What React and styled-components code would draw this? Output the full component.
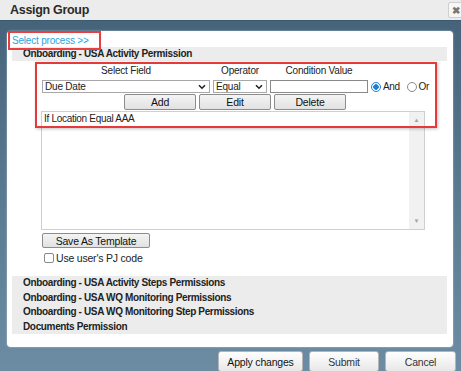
import React from 'react';
import styled, { createGlobalStyle } from 'styled-components';

const GlobalStyle = createGlobalStyle`
    html, body {
        margin: 0;
        padding: 0;
        width: 461px;
        height: 371px;
        overflow: hidden;
        font-family: "Liberation Sans", Arial, sans-serif;
        font-size: 10px;
        color: #222;
    }
    `;

const Dialog = styled.div`
    width: 461px;
    height: 371px;
    display: flex;
    flex-direction: column;
    overflow: hidden;
    `;

const TitleBar = styled.div`
    flex-shrink: 0;
    height: 20px;
    display: flex;
    align-items: center;
    justify-content: space-between;
    background: #ececec;
    border-bottom: 1px solid #3c596e;
    padding-left: 10px;
    `;

const Title = styled.h1`
    margin: 0;
    font-size: 12.5px;
    font-weight: 700;
    letter-spacing: -0.3px;
    color: #2a2a2a;
    `;

const CloseButton = styled.div`
    width: 13px;
    height: 14px;
    margin-right: -2px;
    border: 1px solid #cfcfcf;
    border-radius: 2px;
    background: #f7f7f7;
    color: #777;
    font-size: 10px;
    font-weight: 700;
    display: flex;
    align-items: center;
    justify-content: center;
    `;

const Body = styled.div`
    flex: 1;
    min-height: 0;
    display: flex;
    flex-direction: column;
    padding: 10px 5px 0 7px;
    background: linear-gradient(180deg, #45647c 0%, #5a7a92 50%, #6c8ca3 100%);
    `;

const Panel = styled.div`
    flex-shrink: 0;
    width: 446px;
    box-sizing: border-box;
    background: #fff;
    border-radius: 4px;
    padding: 2px 6px 13px 5px;
    box-shadow: 0 0 2px rgba(255, 255, 255, 0.6);
    `;

const LinkRow = styled.div`
    height: 14px;
    display: flex;
    align-items: center;
    position: relative;
    z-index: 1;
    `;

const Link = styled.a`
    color: #2aa4de;
    font-size: 10px;
    letter-spacing: -0.2px;
    text-decoration: none;
    outline: 2px solid #e84040;
    padding: 1px 10px 1px 2px;
    margin-left: -2px;
    line-height: 13px;
    `;

const SectionHeader = styled.div`
    background: #ececec;
    font-weight: 700;
    letter-spacing: -0.35px;
    height: 14px;
    line-height: 14px;
    padding-left: 11px;
    `;

const Conditions = styled.div`
    position: relative;
    width: 384px;
    margin-left: 29px;
    padding-top: 4px;
    display: flex;
    flex-direction: column;
    `;

const Annotation = styled.div`
    position: absolute;
    left: -6px;
    top: 1px;
    box-sizing: border-box;
    width: 402px;
    height: 66px;
    border: 2px solid #e6393a;
    box-shadow: 1px 1px 3px rgba(0, 0, 0, 0.25);
    pointer-events: none;
    `;

const FieldGrid = styled.div`
    display: grid;
    grid-template-columns: 168px 54px 98px auto;
    column-gap: 3px;
    row-gap: 3px;
    padding-left: 1px;
    align-items: center;
    `;

const FieldLabel = styled.div`
    text-align: center;
    letter-spacing: -0.2px;
    line-height: 12px;
    `;

const Select = styled.div`
    height: 11px;
    border: 1px solid #a8a8a8;
    display: flex;
    align-items: center;
    justify-content: space-between;
    padding: 0 3px 0 2px;
    letter-spacing: -0.2px;
    `;

const Chevron = () => (
    <svg width="8" height="6" viewBox="0 0 8 6">
        <path d="M1 1.2 L4 4.2 L7 1.2" fill="none" stroke="#222" strokeWidth="1.6" />
    </svg>
);

const TextInput = styled.div`
    height: 11px;
    border: 1px solid #8a8a8a;
    background: #fff;
    `;

const Radios = styled.div`
    display: flex;
    align-items: center;
    gap: 2px;
    font-size: 10px;
    letter-spacing: -0.4px;
    white-space: nowrap;
    `;

const Radio = styled.span`
    flex-shrink: 0;
    width: 8px;
    height: 8px;
    border-radius: 50%;
    border: 1px solid ${(p) => (p.checked ? '#1f7ce0' : '#8a8a8a')};
    background: ${(p) => (p.checked ? 'radial-gradient(circle, #1f7ce0 0 2.5px, #fff 3px)' : '#fff')};
    margin-left: ${(p) => (p.gap ? '5px' : '0')};
    `;

const ButtonRow = styled.div`
    display: flex;
    justify-content: center;
    gap: 3px;
    margin-top: 1px;
    padding-left: 4px;
    `;

const FormButton = styled.button`
    width: ${(p) => p.width || 72}px;
    height: ${(p) => p.height || 16}px;
    padding: 0;
    font-family: "Liberation Sans", Arial, sans-serif;
    font-size: 10.5px;
    letter-spacing: -0.2px;
    color: #111;
    background: linear-gradient(180deg, #f4f4f4, #e2e2e2);
    border: 1px solid #8c8c8c;
    border-radius: 2px;
    `;

const ListBox = styled.div`
    height: 117px;
    margin-top: 1px;
    border: 1px solid #cfcfcf;
    display: flex;
    `;

const ListText = styled.div`
    flex: 1;
    padding: 1px 2px;
    letter-spacing: -0.3px;
    line-height: 12px;
    `;

const ScrollTrack = styled.div`
    width: 15px;
    background: #f1f1f1;
    display: flex;
    flex-direction: column;
    justify-content: space-between;
    align-items: center;
    padding: 5px 0;
    color: #a3a3a3;
    font-size: 6px;
    line-height: 6px;
    `;

const TemplateRow = styled.div`
    margin-top: 3px;
    padding-left: 1px;
    display: flex;
    `;

const CheckRow = styled.label`
    display: flex;
    align-items: center;
    gap: 2px;
    height: 11px;
    margin-top: 4px;
    padding-left: 3px;
    letter-spacing: -0.2px;
    font-size: 10.5px;
    `;

const CheckBox = styled.span`
    width: 8px;
    height: 8px;
    border: 1px solid #8a8a8a;
    border-radius: 2px;
    background: #fff;
    `;

const GroupList = styled.div`
    background: #ececec;
    margin-top: 13px;
    padding: 0 0 0 11px;
    `;

const GroupItem = styled.div`
    font-weight: 700;
    letter-spacing: -0.35px;
    line-height: 14.5px;
    `;

const Footer = styled.div`
    display: flex;
    justify-content: flex-end;
    gap: 6px;
    margin-top: 4px;
    `;

const FooterButton = styled.button`
    width: ${(p) => p.width}px;
    height: 21px;
    padding: 0;
    font-family: "Liberation Sans", Arial, sans-serif;
    font-size: 10.5px;
    letter-spacing: -0.2px;
    color: ${(p) => (p.primary ? '#111' : '#333')};
    background: linear-gradient(180deg, #ffffff, #e7e7e7);
    border: 1px solid #b5b5b5;
    border-radius: 3px;
    `;

const groups = [
    'Onboarding - USA Activity Steps Permissions',
    'Onboarding - USA WQ Monitoring Permissions',
    'Onboarding - USA WQ Monitoring Step Permissions',
    'Documents Permission',
];

export default function App() {
    return (
        <>
            <GlobalStyle />
            <Dialog>
                <TitleBar>
                    <Title>Assign Group</Title>
                    <CloseButton>✖</CloseButton>
                </TitleBar>
                <Body>
                    <Panel>
                        <LinkRow>
                            <Link href="#">Select process &gt;&gt;</Link>
                        </LinkRow>
                        <SectionHeader>Onboarding - USA Activity Permission</SectionHeader>
                        <Conditions>
                            <FieldGrid>
                                <FieldLabel>Select Field</FieldLabel>
                                <FieldLabel>Operator</FieldLabel>
                                <FieldLabel>Condition Value</FieldLabel>
                                <span />
                                <Select>Due Date<Chevron /></Select>
                                <Select>Equal<Chevron /></Select>
                                <TextInput />
                                <Radios>
                                    <Radio checked />And
                                    <Radio gap />Or
                                </Radios>
                            </FieldGrid>
                            <ButtonRow>
                                <FormButton>Add</FormButton>
                                <FormButton>Edit</FormButton>
                                <FormButton>Delete</FormButton>
                            </ButtonRow>
                            <ListBox>
                                <ListText>If Location Equal AAA</ListText>
                                <ScrollTrack>
                                    <span>▲</span>
                                    <span>▼</span>
                                </ScrollTrack>
                            </ListBox>
                            <TemplateRow>
                                <FormButton width={108} height={15}>Save As Template</FormButton>
                            </TemplateRow>
                            <CheckRow>
                                <CheckBox />Use user's PJ code
                            </CheckRow>
                            <Annotation />
                        </Conditions>
                        <GroupList>
                            {groups.map((g) => (
                                <GroupItem key={g}>{g}</GroupItem>
                            ))}
                        </GroupList>
                    </Panel>
                    <Footer>
                        <FooterButton width={85} primary>Apply changes</FooterButton>
                        <FooterButton width={70}>Submit</FooterButton>
                        <FooterButton width={71}>Cancel</FooterButton>
                    </Footer>
                </Body>
            </Dialog>
        </>
    );
}
